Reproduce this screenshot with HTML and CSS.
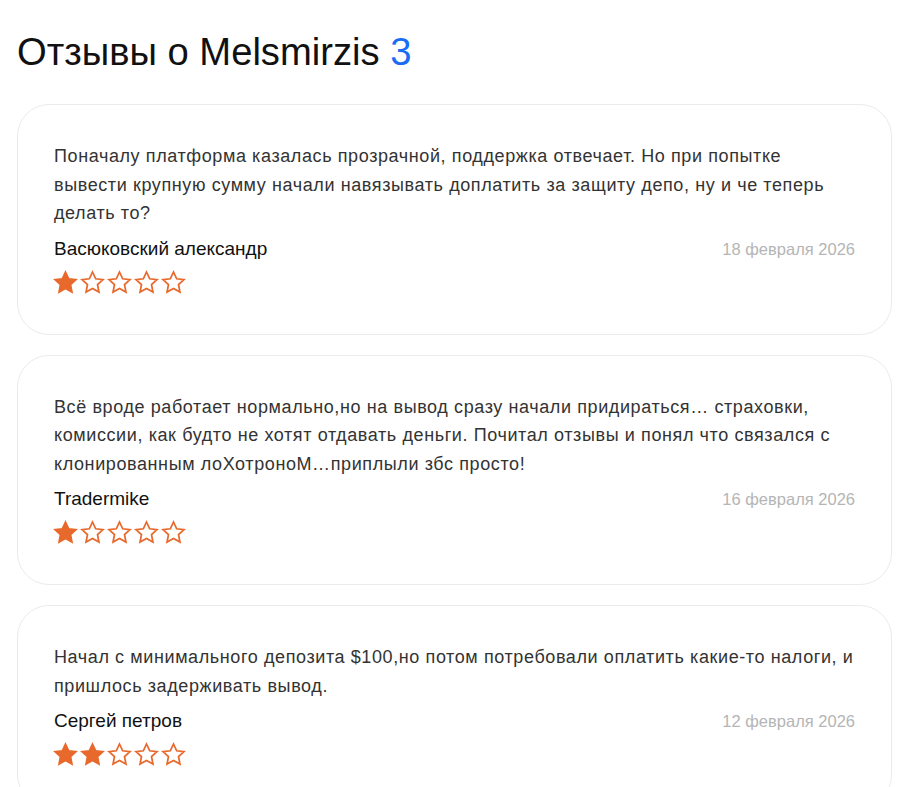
FILE: index.html
```html
<!DOCTYPE html>
<html lang="ru">
<head>
<meta charset="utf-8">
<title>Отзывы о Melsmirzis</title>
<link rel="stylesheet" href="styles.css">
</head>
<body>
<svg width="0" height="0" class="defs" aria-hidden="true">
  <defs>
    <symbol id="star" viewBox="2.4 2.4 19.2 18.3" overflow="visible">
      <polygon points="12,2.4 14.9,8.6 21.6,9.4 16.6,14 17.9,20.7 12,17.4 6.1,20.7 7.4,14 2.4,9.4 9.1,8.6" />
    </symbol>
  </defs>
</svg>
<main class="reviews">
  <h1 class="title">Отзывы о Melsmirzis <span class="count">3</span></h1>

  <article class="card">
    <p class="text">Поначалу платформа казалась прозрачной, поддержка отвечает. Но при попытке вывести крупную сумму начали навязывать доплатить за защиту депо, ну и че теперь делать то?</p>
    <div class="meta">
      <span class="author">Васюковский александр</span>
      <span class="date">18 февраля 2026</span>
    </div>
    <div class="stars">
      <svg class="star full"><use href="#star"/></svg>
      <svg class="star"><use href="#star"/></svg>
      <svg class="star"><use href="#star"/></svg>
      <svg class="star"><use href="#star"/></svg>
      <svg class="star"><use href="#star"/></svg>
    </div>
  </article>

  <article class="card">
    <p class="text">Всё вроде работает нормально,но на вывод сразу начали придираться… страховки, комиссии, как будто не хотят отдавать деньги. Почитал отзывы и понял что связался с клонированным лоХотроноМ…приплыли збс просто!</p>
    <div class="meta">
      <span class="author">Tradermike</span>
      <span class="date">16 февраля 2026</span>
    </div>
    <div class="stars">
      <svg class="star full"><use href="#star"/></svg>
      <svg class="star"><use href="#star"/></svg>
      <svg class="star"><use href="#star"/></svg>
      <svg class="star"><use href="#star"/></svg>
      <svg class="star"><use href="#star"/></svg>
    </div>
  </article>

  <article class="card">
    <p class="text">Начал с минимального депозита $100,но потом потребовали оплатить какие-то налоги, и пришлось задерживать вывод.</p>
    <div class="meta">
      <span class="author">Сергей петров</span>
      <span class="date">12 февраля 2026</span>
    </div>
    <div class="stars">
      <svg class="star full"><use href="#star"/></svg>
      <svg class="star full"><use href="#star"/></svg>
      <svg class="star"><use href="#star"/></svg>
      <svg class="star"><use href="#star"/></svg>
      <svg class="star"><use href="#star"/></svg>
    </div>
  </article>
</main>
</body>
</html>
```

FILE: styles.css
```css
html, body {
  margin: 0;
  padding: 0;
  background: #ffffff;
}

body {
  font-family: "Liberation Sans", Arial, sans-serif;
  color: #111111;
}

.defs {
  position: absolute;
  width: 0;
  height: 0;
  overflow: hidden;
}

.reviews {
  width: 875px;
  padding: 30px 0 0 17px;
  display: flex;
  flex-direction: column;
  gap: 20px;
}

.title {
  margin: 0 0 10px;
  font-size: 38.2px;
  line-height: 44px;
  font-weight: 400;
  color: #111111;
}

.count {
  color: #1a6cf5;
}

.card {
  border: 1px solid #ebebeb;
  border-radius: 32px;
  padding: 37px 36px 42px;
  display: flex;
  flex-direction: column;
}

.text {
  margin: 0;
  font-size: 18px;
  line-height: 28.5px;
  letter-spacing: 0.6px;
  color: #333333;
}

.meta {
  margin-top: 9px;
  display: flex;
  justify-content: space-between;
  align-items: baseline;
  line-height: 24px;
}

.author {
  font-size: 19px;
  color: #111111;
}

.date {
  font-size: 16.5px;
  color: #b5b5b5;
}

.stars {
  margin-top: 11px;
  display: flex;
  gap: 6px;
  padding-left: 1px;
}

.star {
  width: 21px;
  height: 20px;
  overflow: visible;
  fill: none;
  stroke: #e8692c;
  stroke-width: 1.6px;
  stroke-linejoin: miter;
}

.star.full {
  fill: #e8692c;
}
```
